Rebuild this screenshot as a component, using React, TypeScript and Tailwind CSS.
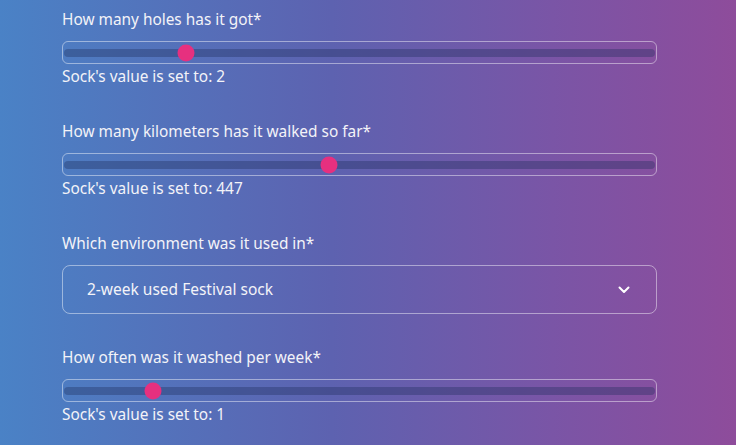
import React from "react";

function Slider({ pct }: { pct: number }) {
  return (
    <div className="relative h-[23px] rounded-[6px] border border-white/45 flex items-center px-[1px]">
      <div className="h-[8px] w-full rounded-full bg-[#1e2a5a]/35" />
      <div
        className="absolute top-1/2 -translate-y-1/2 -translate-x-1/2 w-[17px] h-[17px] rounded-full bg-[#e6307f]"
        style={{ left: `${pct}%` }}
      />
    </div>
  );
}

function SliderField({ label, value, pct }: { label: string; value: string; pct: number }) {
  return (
    <div className="flex flex-col">
      <div className="h-[22px] leading-[22px] text-[15.4px]">{label}</div>
      <div className="mt-[10px]">
        <Slider pct={pct} />
      </div>
      <div className="mt-[2px] h-[22px] leading-[22px] text-[15.4px]">Sock's value is set to: {value}</div>
    </div>
  );
}

export default function App() {
  return (
    <div
      className="w-[736px] h-[445px] overflow-hidden text-[#f3f3f8] bg-[linear-gradient(90deg,#4a82c6_0%,#5d62b0_45%,#7a55a6_75%,#8e4c9b_100%)]"
      style={{ fontFamily: '"Noto Sans", "Open Sans", sans-serif' }}
    >
      <div className="ml-[62px] w-[595px] pt-[9px] flex flex-col gap-[33px]">
        <SliderField label="How many holes has it got*" value="2" pct={20.75} />
        <SliderField label="How many kilometers has it walked so far*" value="447" pct={44.85} />
        <div className="flex flex-col">
          <div className="h-[22px] leading-[22px] text-[15.4px]">Which environment was it used in*</div>
          <div className="mt-[10px] h-[49px] rounded-[8px] border border-white/45 flex items-center justify-between pl-[24px] pr-[26px]">
            <span className="text-[15.5px]">2-week used Festival sock</span>
            <svg width="12" height="8" viewBox="0 0 12 8" fill="none">
              <path d="M1.5 1.5 L6 6 L10.5 1.5" stroke="white" strokeWidth="2" strokeLinecap="round" strokeLinejoin="round" />
            </svg>
          </div>
        </div>
        <SliderField label="How often was it washed per week*" value="1" pct={15.15} />
      </div>
    </div>
  );
}
